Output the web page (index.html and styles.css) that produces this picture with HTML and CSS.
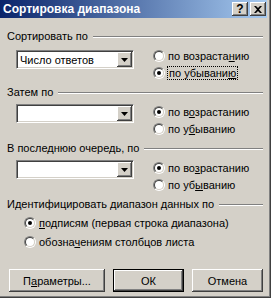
FILE: index.html
```html
<!DOCTYPE html>
<html lang="ru">

<head>
    <meta charset="UTF-8">
    <meta name="viewport" content="width=device-width, initial-scale=1.0">
    <title>Сортировка диапазона</title>
    <link rel="stylesheet" href="styles.css">
</head>

<body>
    <div class="window">
        <!-- заголовок окна -->
        <div class="titlebar">
            <span class="title">Сортировка диапазона</span>
            <div class="caption-buttons">
                <span class="cap-btn cap-help">?</span>
                <span class="cap-btn">
                    <svg width="8" height="7" viewBox="0 0 8 7"><path d="M0 0h2l2 2 2-2h2L5 3.5 8 7H6L4 5 2 7H0l3-3.5z" fill="#000"/></svg>
                </span>
            </div>
        </div>

        <div class="dialog-body">
            <!-- 1. Сортировать по -->
            <div class="group">
                <div class="group-label"><span>Сортировать по</span></div>
                <div class="group-row">
                    <div class="combo combo-first">
                        <span class="combo-text">Число ответов</span>
                        <span class="combo-btn"><svg width="7" height="4" viewBox="0 0 7 4"><path d="M0 0h7L3.5 4z" fill="#000"/></svg></span>
                    </div>
                    <div class="radios">
                        <div class="radio"><span class="dot"></span><span>по возраста<u>н</u>ию</span></div>
                        <div class="radio checked"><span class="dot"></span><span class="focus">по убывани<u>ю</u></span></div>
                    </div>
                </div>
            </div>

            <!-- 2. Затем по -->
            <div class="group">
                <div class="group-label"><span>Затем по</span></div>
                <div class="group-row">
                    <div class="combo">
                        <span class="combo-text"></span>
                        <span class="combo-btn"><svg width="7" height="4" viewBox="0 0 7 4"><path d="M0 0h7L3.5 4z" fill="#000"/></svg></span>
                    </div>
                    <div class="radios">
                        <div class="radio checked"><span class="dot"></span><span>по в<u>о</u>зрастанию</span></div>
                        <div class="radio"><span class="dot"></span><span>по у<u>б</u>ыванию</span></div>
                    </div>
                </div>
            </div>

            <!-- 3. В последнюю очередь, по -->
            <div class="group">
                <div class="group-label"><span>В последнюю очередь, по</span></div>
                <div class="group-row">
                    <div class="combo">
                        <span class="combo-text"></span>
                        <span class="combo-btn"><svg width="7" height="4" viewBox="0 0 7 4"><path d="M0 0h7L3.5 4z" fill="#000"/></svg></span>
                    </div>
                    <div class="radios">
                        <div class="radio checked"><span class="dot"></span><span>по во<u>з</u>растанию</span></div>
                        <div class="radio"><span class="dot"></span><span>по уб<u>ы</u>ванию</span></div>
                    </div>
                </div>
            </div>

            <!-- 4. Идентифицировать диапазон -->
            <div class="group group-last">
                <div class="group-label"><span>Идентифицировать диапазон данных по</span></div>
                <div class="radios radios-wide">
                    <div class="radio checked"><span class="dot"></span><span><u>п</u>одписям (первая строка диапазона)</span></div>
                    <div class="radio"><span class="dot"></span><span>обозна<u>ч</u>ениям столбцов листа</span></div>
                </div>
            </div>

            <!-- кнопки -->
            <div class="buttons">
                <div class="btn btn-wide">П<u>а</u>раметры...</div>
                <div class="btn btn-default">ОК</div>
                <div class="btn">Отмена</div>
            </div>
        </div>
    </div>
</body>

</html>
```

FILE: styles.css
```css
/* общие стили */

*,
 ::after,
 ::before {
    margin: 0;
    padding: 0;
    box-sizing: border-box;
}

body {
    width: 271px;
    height: 298px;
    overflow: hidden;
    background-color: #d4d0c8;
    font-family: "Liberation Sans", Arial, sans-serif;
    font-size: 11px;
    color: #000;
}

u {
    text-decoration: underline;
    text-underline-offset: 1px;
}
/* окно */

.window {
    width: 271px;
    height: 298px;
    background-color: #d4d0c8;
    padding: 0 4px 4px 0;
    box-shadow: inset -1px -1px #404040, inset -2px -2px #808080;
    display: flex;
    flex-direction: column;
}

.titlebar {
    height: 18px;
    background: linear-gradient(to right, #0a246a, #a6caf0);
    display: flex;
    flex-direction: row;
    align-items: center;
    justify-content: space-between;
    padding: 0 1px 0 3px;
}

.title {
    color: #fff;
    font-weight: bold;
    font-size: 12px;
}

.caption-buttons {
    display: flex;
    flex-direction: row;
    gap: 2px;
}

.cap-btn {
    width: 16px;
    height: 14px;
    background-color: #d4d0c8;
    box-shadow: inset -1px -1px #404040, inset 1px 1px #fff, inset -2px -2px #808080;
    display: flex;
    align-items: center;
    justify-content: center;
}

.cap-help {
    font-weight: bold;
    font-size: 12px;
    line-height: 14px;
}
/* содержимое */

.dialog-body {
    padding: 12px 4px 0 7px;
    display: flex;
    flex-direction: column;
}

.group {
    margin-bottom: 5px;
}

.group-label {
    height: 13px;
    line-height: 13px;
    display: flex;
    flex-direction: row;
    align-items: center;
    gap: 5px;
}

.group-label::after {
    content: "";
    flex: 1;
    height: 2px;
    border-top: 1px solid #808080;
    border-bottom: 1px solid #fff;
}

.group-row {
    display: flex;
    flex-direction: row;
    margin-top: 4px;
    padding-left: 9px;
    gap: 19px;
}
/* выпадающий список */

.combo {
    width: 118px;
    height: 19px;
    margin-top: 1px;
    background-color: #fff;
    border: 1px solid;
    border-color: #808080 #fff #fff #808080;
    box-shadow: inset 1px 1px #404040, inset -1px -1px #d4d0c8;
    display: flex;
    flex-direction: row;
    align-items: center;
    justify-content: space-between;
    padding: 1px;
}

.combo-first {
    margin-top: 3px;
}

.combo-text {
    padding-left: 2px;
}

.combo-btn {
    width: 15px;
    height: 15px;
    background-color: #d4d0c8;
    box-shadow: inset -1px -1px #404040, inset 1px 1px #fff, inset -2px -2px #808080;
    display: flex;
    align-items: center;
    justify-content: center;
}
/* переключатели */

.radios {
    display: flex;
    flex-direction: column;
}

.radio {
    height: 17px;
    display: flex;
    flex-direction: row;
    align-items: center;
    gap: 3px;
}

.radios-wide {
    margin-top: 2px;
    padding-left: 17px;
}

.radios-wide .radio {
    height: 19px;
}

.dot {
    width: 12px;
    height: 12px;
    border-radius: 50%;
    border: 1px solid;
    border-color: #808080 #fff #fff #808080;
    position: relative;
    flex-shrink: 0;
}

.dot::before {
    content: "";
    position: absolute;
    inset: 0;
    border-radius: 50%;
    border: 1px solid;
    border-color: #404040 #d4d0c8 #d4d0c8 #404040;
    background-color: #fff;
}

.checked .dot::after {
    content: "";
    position: absolute;
    width: 4px;
    height: 4px;
    left: 3px;
    top: 3px;
    border-radius: 50%;
    background-color: #000;
}

.focus {
    outline: 1px dotted #000;
    outline-offset: 0;
    padding: 0 1px;
}
/* кнопки */

.buttons {
    display: flex;
    flex-direction: row;
    gap: 8px;
    margin-top: 13px;
    padding-left: 2px;
}

.btn {
    width: 71px;
    height: 23px;
    background-color: #d4d0c8;
    box-shadow: inset -1px -1px #404040, inset 1px 1px #fff, inset -2px -2px #808080;
    display: flex;
    align-items: center;
    justify-content: center;
}

.btn-wide {
    width: 96px;
}

.btn-default {
    border: 1px solid #000;
}
```
